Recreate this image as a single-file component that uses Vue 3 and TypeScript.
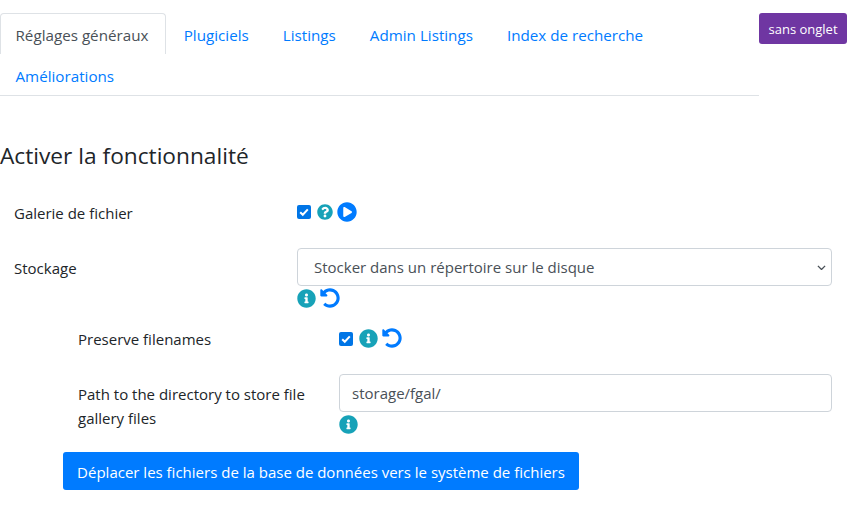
<script setup lang="ts">
const tabs = ['Plugiciels', 'Listings', 'Admin Listings', 'Index de recherche', 'Améliorations']
const info = 'M256 8C119.043 8 8 119.083 8 256c0 136.997 111.043 248 248 248s248-111.003 248-248C504 119.083 392.957 8 256 8zm0 110c23.196 0 42 18.804 42 42s-18.804 42-42 42-42-18.804-42-42 18.804-42 42-42zm56 254c0 6.627-5.373 12-12 12h-88c-6.627 0-12-5.373-12-12v-24c0-6.627 5.373-12 12-12h12v-64h-12c-6.627 0-12-5.373-12-12v-24c0-6.627 5.373-12 12-12h64c6.627 0 12 5.373 12 12v100h12c6.627 0 12 5.373 12 12v24z'
const question = 'M504 256c0 136.997-111.043 248-248 248S8 392.997 8 256C8 119.083 119.043 8 256 8s248 111.083 248 248zM262.655 90c-54.497 0-89.255 22.957-116.549 63.758-3.536 5.286-2.353 12.415 2.715 16.258l34.699 26.31c5.205 3.947 12.621 3.008 16.665-2.122 17.864-22.658 30.113-35.797 57.303-35.797 20.429 0 45.698 13.148 45.698 32.958 0 14.976-12.363 22.667-32.534 33.976C247.128 238.528 216 254.941 216 296v4c0 6.627 5.373 12 12 12h56c6.627 0 12-5.373 12-12v-1.333c0-28.462 83.186-29.647 83.186-106.667 0-58.002-60.165-102-116.531-102zM256 338c-25.365 0-46 20.635-46 46 0 25.364 20.635 46 46 46s46-20.636 46-46c0-25.365-20.635-46-46-46z'
const play = 'M256 8C119 8 8 119 8 256s111 248 248 248 248-111 248-248S393 8 256 8zm115.7 272l-176 101c-15.8 8.8-35.7-2.5-35.7-20.9V152c0-18.3 19.8-29.7 35.7-20.9l176 107c16.4 9.2 16.4 33 0 42.8z'
const undo = 'M255.545 8c-66.269.119-126.438 26.233-170.86 68.685L48.971 40.971C33.851 25.851 8 36.559 8 57.941V192c0 13.255 10.745 24 24 24h134.059c21.382 0 32.09-25.851 16.971-40.971l-41.75-41.75c30.864-28.899 70.801-44.907 113.23-45.273 92.398-.798 170.283 73.977 169.484 169.442C423.236 348.009 349.816 424 256 424c-41.127 0-79.997-14.678-110.63-41.556-4.743-4.161-11.906-3.908-16.368.553L89.34 422.659c-4.872 4.872-4.631 12.815.482 17.433C133.798 479.813 192.074 504 256 504c136.966 0 247.999-111.033 248-247.998C504.001 119.193 392.354 7.755 255.545 8z'
</script>

<template>
  <div class="page">
    <div class="top">
      <ul class="tabs">
        <li class="tab active">Réglages généraux</li>
        <li v-for="t in tabs" :key="t" class="tab">{{ t }}</li>
      </ul>
      <button class="notab">sans onglet</button>
    </div>

    <h2 class="title">Activer la fonctionnalité</h2>

    <div class="row r1">
      <div class="label">Galerie de fichier</div>
      <div class="icons">
        <span class="check"><svg viewBox="0 0 14 14"><path d="M3.2 7.2l2.6 2.6 5-5.4" fill="none" stroke="#fff" stroke-width="2"/></svg></span>
        <svg class="ic q" viewBox="0 0 512 512"><path :d="question" /></svg>
        <svg class="ic p" viewBox="0 0 512 512"><path :d="play" /></svg>
      </div>
    </div>

    <div class="row r2">
      <div class="label">Stockage</div>
      <div class="ctl">
        <div class="select">
          <span>Stocker dans un répertoire sur le disque</span>
          <svg class="chev" viewBox="0 0 10 6"><path d="M1 1l4 4 4-4" fill="none" stroke="#495057" stroke-width="1.5"/></svg>
        </div>
        <div class="icons under">
          <svg class="ic i" viewBox="0 0 512 512"><path :d="info" /></svg>
          <svg class="ic u" viewBox="0 0 512 512"><path :d="undo" /></svg>
        </div>
      </div>
    </div>

    <div class="sub">
      <div class="row r3">
        <div class="label">Preserve filenames</div>
        <div class="icons">
          <span class="check"><svg viewBox="0 0 14 14"><path d="M3.2 7.2l2.6 2.6 5-5.4" fill="none" stroke="#fff" stroke-width="2"/></svg></span>
          <svg class="ic i" viewBox="0 0 512 512"><path :d="info" /></svg>
          <svg class="ic u" viewBox="0 0 512 512"><path :d="undo" /></svg>
        </div>
      </div>
      <div class="row r4">
        <div class="label">Path to the directory to store file gallery files</div>
        <div class="ctl">
          <div class="input">storage/fgal/</div>
          <div class="icons under2">
            <svg class="ic i" viewBox="0 0 512 512"><path :d="info" /></svg>
          </div>
        </div>
      </div>
      <button class="primary">Déplacer les fichiers de la base de données vers le système de fichiers</button>
    </div>
  </div>
</template>

<style>
html, body { margin: 0; background: #fff; }
</style>

<style scoped>
.page { width: 851px; height: 505px; overflow: hidden; box-sizing: border-box; font-family: "Open Sans", "Noto Sans", sans-serif; font-size: 15px; color: #212529; line-height: 24px; }
.top { display: flex; align-items: flex-start; padding-top: 13px; }
.tabs { list-style: none; margin: 0; padding: 0; width: 759px; height: 83px; box-sizing: border-box; display: flex; flex-wrap: wrap; align-content: flex-start; border-bottom: 1px solid #dee2e6; }
.tab { padding: 9px 15.5px 8px 16.5px; height: 41px; box-sizing: border-box; color: #007bff; border: 1px solid transparent; white-space: nowrap; font-size: 15.2px; }
.tab.active { color: #495057; border-color: #dee2e6; border-radius: 4px 4px 0 0; border-bottom: 0; padding-left: 14.5px; padding-right: 16.8px; }
.tab:last-child { padding-left: 14.5px; }
.notab { width: 88px; height: 31px; padding: 0; border: 0; border-radius: 3px; background: #6f36a2; color: #fff; font: 13px "Open Sans", "Noto Sans", sans-serif; }
.title { margin: 45px 0 0; font-size: 22.7px; font-weight: 400; line-height: 30px; }
.row { display: flex; }
.label { width: 297px; padding-left: 14px; box-sizing: border-box; flex: none; }
.icons { display: flex; align-items: center; }
.r1 { margin-top: 29px; height: 42px; }
.r1 .label { padding-top: 1px; }
.r1 .icons { height: 24px; padding-bottom: 2px; }
.check { width: 14px; height: 14px; border-radius: 2px; background: #0075e6; display: block; flex: none; }
.check svg { display: block; width: 14px; height: 14px; }
.ic { display: block; flex: none; }
.q { width: 16px; height: 16px; fill: #17a2b8; margin-left: 6px; }
.p { width: 20px; height: 20px; fill: #007bff; margin-left: 4px; }
.i { width: 19px; height: 19px; fill: #17a2b8; }
.u { width: 20px; height: 20px; fill: #007bff; margin-left: 4px; }
.r2 { margin-top: 6px; }
.r2 .label { padding-top: 8px; }
.ctl { flex: none; width: 535px; }
.select { height: 38px; box-sizing: border-box; border: 1px solid #ced4da; border-radius: 4px; padding: 0 5px 0 16px; display: flex; align-items: center; justify-content: space-between; color: #495057; }
.chev { width: 9px; height: 5.4px; display: block; margin-top: 1px; }
.under { margin-top: 2px; height: 20px; }
.sub { padding-left: 63px; }
.sub .label { width: 276px; padding-left: 15px; }
.r3 { margin-top: 18px; }
.r3 .i { margin-left: 6px; }
.r3 .u { margin-left: 4px; margin-top: -2px; }
.r3 .label { padding-top: 1px; }
.r4 { margin-top: 23px; }
.r4 .label { padding-top: 8px; }
.r4 .ctl { width: 493px; }
.input { height: 38px; box-sizing: border-box; border: 1px solid #ced4da; border-radius: 4px; padding: 0 12px; display: flex; align-items: center; color: #495057; }
.under2 { margin-top: 3px; }
.primary { display: block; margin-top: 18px; width: 516px; height: 38px; padding: 1px 0 0; border: 0; border-radius: 3px; background: #007bff; color: #fff; font: 15px/24px "Open Sans", "Noto Sans", sans-serif; }
</style>
